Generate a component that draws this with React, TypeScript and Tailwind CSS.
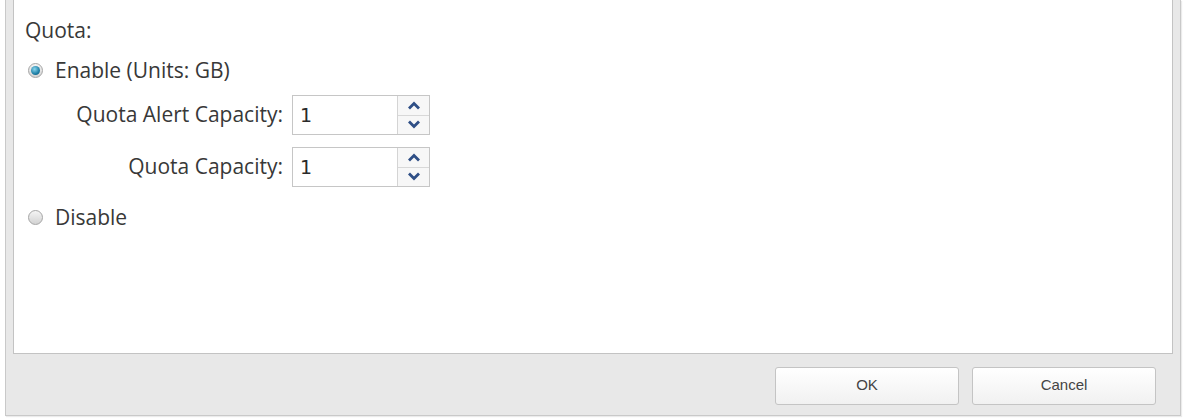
import React from "react";

const font = { fontFamily: '"Open Sans", "Noto Sans", sans-serif' };

function Radio({ checked }: { checked?: boolean }) {
  return (
    <span className="relative inline-flex h-[15px] w-[15px] shrink-0 items-center justify-center rounded-full border border-[#a5a5a5] bg-gradient-to-b from-[#f4f4f4] to-[#d3d3d3]">
      {checked && (
        <span className="h-[9px] w-[9px] rounded-full bg-[radial-gradient(circle_at_40%_35%,#8ad6ee,#1d7fa6_60%,#0e4f6e)]" />
      )}
    </span>
  );
}

function Spinner({ label, value }: { label: string; value: string }) {
  return (
    <div className="flex items-center">
      <span className="w-[267px] pr-[9px] text-right">{label}</span>
      <div className="flex h-[40px] w-[138px] border border-[#c6c6c6] bg-white">
        <div
          className="flex flex-1 items-center pl-[7px] text-[19px] text-[#2a2a2a]"
          style={{ fontFamily: '"DejaVu Sans", sans-serif' }}
        >
          {value}
        </div>
        <div className="flex w-[32px] flex-col border-l border-[#d4d4d4] bg-[#f7f7f7]">
          <button className="flex flex-1 items-center justify-center border-b border-[#d8d8d8]">
            <svg width="14" height="9" viewBox="0 0 14 9">
              <path d="M2 7.5 L7 2.5 L12 7.5" fill="none" stroke="#2f4f86" strokeWidth="2.8" />
            </svg>
          </button>
          <button className="flex flex-1 items-center justify-center">
            <svg width="14" height="9" viewBox="0 0 14 9">
              <path d="M2 1.5 L7 6.5 L12 1.5" fill="none" stroke="#2f4f86" strokeWidth="2.8" />
            </svg>
          </button>
        </div>
      </div>
    </div>
  );
}

function DialogButton({ children }: { children: React.ReactNode }) {
  return (
    <button
      className="flex h-[38px] w-[184px] items-center justify-center rounded-[3px] border border-[#c4c4c4] bg-gradient-to-b from-white to-[#f1f1f1] text-[15px] text-[#444]"
      style={{ fontFamily: '"Liberation Sans", Arial, sans-serif' }}
    >
      {children}
    </button>
  );
}

export default function App() {
  return (
    <div className="h-[420px] w-[1185px] bg-white" style={font}>
      <div className="ml-[5px] flex h-[416px] w-[1176px] flex-col border-x border-b border-[#c9c9c9] bg-[#e8e8e8] shadow-[1px_1px_1px_rgba(0,0,0,0.08)]">
        <div className="mx-[7px] h-[354px] border-x border-b border-[#c3c3c3] bg-white pl-[11px] pt-[17px] text-[21px] text-[#383838]">
          <div className="leading-[26px]">Quota:</div>
          <label className="mt-[14px] flex items-center gap-[12px] pl-[3px] leading-[26px]">
            <Radio checked />
            <span>Enable (Units: GB)</span>
          </label>
          <div className="mt-[12px] flex flex-col gap-[12px]">
            <Spinner label="Quota Alert Capacity:" value="1" />
            <Spinner label="Quota Capacity:" value="1" />
          </div>
          <label className="mt-[17px] flex items-center gap-[12px] pl-[3px] leading-[26px]">
            <Radio />
            <span>Disable</span>
          </label>
        </div>
        <div className="flex flex-1 items-center justify-end gap-[13px] pr-[24px] pt-[2px]">
          <DialogButton>OK</DialogButton>
          <DialogButton>Cancel</DialogButton>
        </div>
      </div>
    </div>
  );
}
